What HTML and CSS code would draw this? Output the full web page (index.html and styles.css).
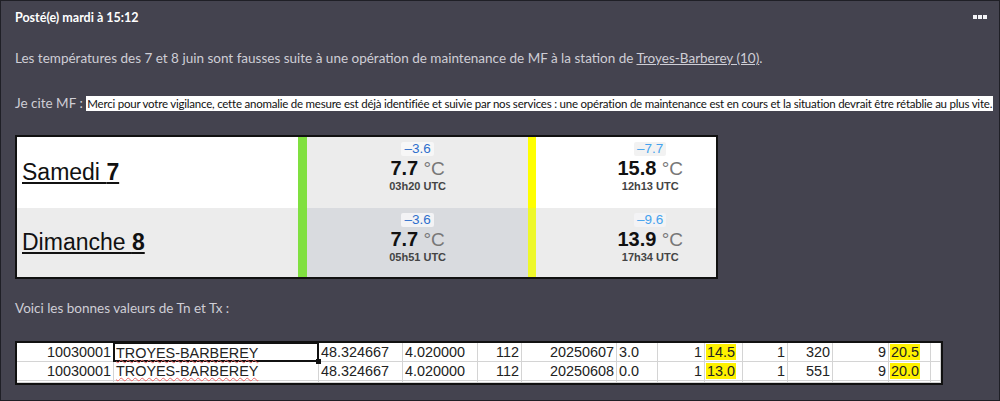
FILE: index.html
```html
<!DOCTYPE html>
<html lang="fr">

<head>
    <meta charset="UTF-8">
    <title>Posté(e) mardi à 15:12</title>
    <link rel="stylesheet" href="styles.css">
</head>

<body>
    <div class="post">
        <div class="post-head">
            <span class="posted">Posté(e) mardi à 15:12</span>
            <span class="menu"><i></i><i></i><i></i></span>
        </div>

        <p class="line first">Les températures des 7 et 8 juin sont fausses suite à une opération de maintenance de MF à la station de <a href="#">Troyes-Barberey (10)</a>.</p>

        <p class="line quote-line">Je cite MF : <span class="quote">Merci pour votre vigilance, cette anomalie de mesure est déjà identifiée et suivie par nos services : une opération de maintenance est en cours et la situation devrait être rétablie au plus vite.</span></p>

        <!-- capture of the daily Tn / Tx table -->
        <table class="obs">
            <colgroup>
                <col class="c-day">
                <col class="c-bar">
                <col class="c-tn">
                <col class="c-bar2">
                <col class="c-tx">
            </colgroup>
            <tr class="odd">
                <td class="day"><a href="#">Samedi <b>7</b></a></td>
                <td class="bar green"></td>
                <td class="val tn">
                    <span class="delta dark">–3.6</span>
                    <div class="temp"><b>7.7</b> °C</div>
                    <div class="hour">03h20 UTC</div>
                </td>
                <td class="bar yellow"></td>
                <td class="val tx">
                    <span class="delta light">–7.7</span>
                    <div class="temp"><b>15.8</b> °C</div>
                    <div class="hour">12h13 UTC</div>
                </td>
            </tr>
            <tr class="even">
                <td class="day"><a href="#">Dimanche <b>8</b></a></td>
                <td class="bar green"></td>
                <td class="val tn">
                    <span class="delta dark">–3.6</span>
                    <div class="temp"><b>7.7</b> °C</div>
                    <div class="hour">05h51 UTC</div>
                </td>
                <td class="bar yellow2"></td>
                <td class="val tx">
                    <span class="delta light">–9.6</span>
                    <div class="temp"><b>13.9</b> °C</div>
                    <div class="hour">17h34 UTC</div>
                </td>
            </tr>
        </table>

        <p class="line voici">Voici les bonnes valeurs de Tn et Tx :</p>

        <!-- capture of the spreadsheet -->
        <div class="sheet">
            <div class="r">10030001</div>
            <div class="l selected"><span class="typo">TROYES-BARBEREY</span></div>
            <div class="l">48.324667</div>
            <div class="l">4.020000</div>
            <div class="r">112</div>
            <div class="r">20250607</div>
            <div class="l">3.0</div>
            <div class="r">1</div>
            <div class="l"><span class="hl">14.5</span></div>
            <div class="r">1</div>
            <div class="r">320</div>
            <div class="r">9</div>
            <div class="l"><span class="hl">20.5</span></div>
            <div class="l"></div>

            <div class="r">10030001</div>
            <div class="l"><span class="typo">TROYES-BARBEREY</span></div>
            <div class="l">48.324667</div>
            <div class="l">4.020000</div>
            <div class="r">112</div>
            <div class="r">20250608</div>
            <div class="l">0.0</div>
            <div class="r">1</div>
            <div class="l"><span class="hl">13.0</span></div>
            <div class="r">1</div>
            <div class="r">551</div>
            <div class="r">9</div>
            <div class="l"><span class="hl">20.0</span></div>
            <div class="l"></div>

            <div></div><div></div><div></div><div></div><div></div><div></div><div></div>
            <div></div><div></div><div></div><div></div><div></div><div></div><div></div>
        </div>
    </div>
</body>

</html>
```

FILE: styles.css
```css
body {
    margin: 0;
    font-family: Lato, "Open Sans", sans-serif;
    background-color: #44434f;
}

.post {
    box-sizing: border-box;
    width: 1000px;
    height: 401px;
    border: 1px solid #1f1f26;
    padding: 0 14px;
    background-color: #44434f;
    overflow: hidden;
}

.post-head {
    display: flex;
    justify-content: space-between;
    align-items: center;
    height: 33px;
}

.posted {
    color: #ffffff;
    font-size: 12.5px;
    font-weight: bold;
}

.menu {
    display: flex;
    gap: 1px;
    margin-right: -2px;
    margin-top: -2px;
}

.menu i {
    display: block;
    width: 4px;
    height: 4px;
    background-color: #f4f4f8;
}

.line {
    margin: 0;
    color: #cfced6;
    font-size: 13.5px;
    line-height: 20px;
    white-space: nowrap;
}

.line a {
    color: #cfced6;
    text-decoration: underline;
}

.first {
    margin-top: 14px;
}

.quote-line {
    margin-top: 25px;
}

.quote {
    background-color: #ffffff;
    color: #111111;
    font-size: 11.5px;
    letter-spacing: -0.22px;
    padding: 1px 1px 1px 1px;
}

/* daily table */

.obs {
    margin-top: 21px;
    width: 703px;
    border: 2px solid #111111;
    border-collapse: collapse;
    table-layout: fixed;
    font-family: "Liberation Sans", Arial, sans-serif;
}

.c-day {
    width: 281px;
}

.c-bar {
    width: 9px;
}

.c-tn {
    width: 221px;
}

.c-bar2 {
    width: 8px;
}

.c-tx {
    width: 180px;
}

.obs td {
    padding: 0;
}

.odd td {
    height: 69px;
}

.even td {
    height: 67px;
}

.odd .day,
.odd .tx {
    background-color: #ffffff;
}

.odd .tn,
.even .day,
.even .tx {
    background-color: #ececec;
}

.even .tn {
    background-color: #d9dbdf;
}

.day {
    padding-left: 5px !important;
    font-size: 23px;
}

.day a {
    color: #111111;
    text-decoration: underline;
}

.green {
    background-color: #80e040;
}

.yellow {
    background-color: #ffff00;
}

.yellow2 {
    background-color: #eef82a;
}

.val {
    vertical-align: top;
    text-align: center;
    padding-top: 2px !important;
    color: #111111;
}

.tx {
    padding-left: 48px !important;
}

.delta {
    display: inline-block;
    padding: 0 3px;
    font-size: 13.5px;
    line-height: 14px;
    border-radius: 2px;
}

.delta.dark {
    color: #2f6fcc;
    background-color: #f7f7f7;
}

.delta.light {
    color: #44a2ee;
    background-color: #f2f2f2;
}

.even .delta {
    background-color: #f3f3f5;
}

.temp {
    font-size: 19px;
    line-height: 23px;
    color: #777777;
}

.temp b {
    font-size: 20px;
    color: #111111;
}

.hour {
    font-size: 11px;
    font-weight: bold;
    line-height: 13px;
    color: #444444;
}

.voici {
    margin-top: 19px;
}

/* spreadsheet */

.sheet {
    display: grid;
    grid-template-columns: 97px 205px 84px 75px 44px 95px 41px 47px 38px 45px 45px 56px 42px 10px;
    grid-template-rows: 19px 19px 2px;
    width: 924px;
    margin-top: 23px;
    border: 2px solid #111111;
    background-color: #ffffff;
    font-family: "Liberation Sans", Arial, sans-serif;
    font-size: 14.4px;
    color: #222222;
}

.sheet div {
    box-sizing: border-box;
    border-right: 1px solid #d4d4d4;
    border-bottom: 1px solid #d4d4d4;
    padding: 0 2px;
    line-height: 18px;
    white-space: nowrap;
}

.sheet .r {
    text-align: right;
}

.sheet .selected {
    position: relative;
    border: 2px solid #111111;
    margin: -1px 0 0 -1px;
    padding-left: 1px;
}

.sheet .selected::after {
    content: "";
    position: absolute;
    right: -4px;
    bottom: -4px;
    width: 5px;
    height: 5px;
    background-color: #111111;
}

.typo {
    text-decoration: underline wavy #ee6a6a;
    text-decoration-thickness: 1px;
    text-underline-offset: 1px;
}

.hl {
    display: inline-block;
    background-color: #fff200;
    line-height: 16px;
    padding: 0 1px;
    margin-left: -1px;
}
```
